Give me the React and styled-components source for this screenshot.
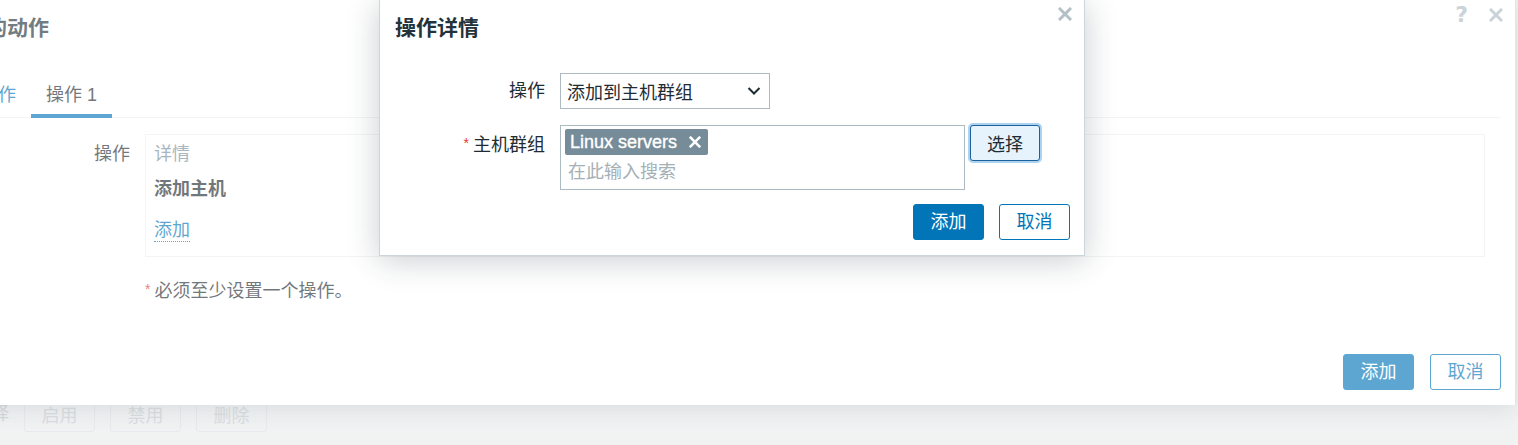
import React from 'react';
import styled, { createGlobalStyle } from 'styled-components';

const FONT = `"Liberation Sans", "Noto Sans CJK SC", sans-serif`;
const BLUE = '#0275b8';
const TEXT = '#1f2c33';

const Global = createGlobalStyle`
  html, body { margin: 0; padding: 0; }
  body {
    font-family: ${FONT};
    font-size: 18px;
    color: ${TEXT};
    background: #e9eced;
    overflow: hidden;
  }
  * { box-sizing: border-box; }
`;

const Page = styled.div`
  position: relative;
  width: 1518px;
  height: 445px;
  overflow: hidden;
  display: flex;
  flex-direction: column;
  justify-content: flex-end;
`;

const PageFooter = styled.div`
  display: flex;
  align-items: center;
  gap: 15px;
  margin-left: -42px;
  padding-bottom: 13px;
`;

const SelectedCount = styled.span`
  color: #bcc5ca;
  line-height: 24px;
`;

const GhostButton = styled.button`
  width: 71px;
  height: 36px;
  padding: 0;
  font: inherit;
  color: #c3cbcf;
  background: transparent;
  border: 1px solid #d9dfe2;
  border-radius: 3px;
`;

/* ---------- outer (background) modal ---------- */

const OuterModal = styled.div`
  position: absolute;
  left: -50px;
  top: 0;
  width: 1566px;
  height: 405px;
  background: #fff;
  border-right: 1px solid #cfd7db;
  box-shadow: 0 2px 24px rgba(40, 55, 65, 0.22);
  display: flex;
  flex-direction: column;
`;

const ModalHeader = styled.div`
  padding: 16px 15px;
`;

const ModalTitle = styled.h4`
  margin: 0;
  font-size: 21px;
  line-height: 24px;
  font-weight: bold;
  color: #23333b;
`;

const HeaderTools = styled.div`
  position: absolute;
  top: 4px;
  right: 12px;
  display: flex;
  align-items: center;
  gap: 21px;
`;

const HelpMark = styled.span`
  font-family: "DejaVu Sans", sans-serif;
  font-weight: bold;
  font-size: 22px;
  line-height: 22px;
  color: #acbbc2;
`;

const CloseIcon = ({ color = '#acbbc2', size = 14 }) => (
  <svg width={size} height={size} viewBox="0 0 14 14">
    <path d="M2 2 L12 12 M12 2 L2 12" stroke={color} strokeWidth="3" strokeLinecap="square" />
  </svg>
);

const ModalBody = styled.div`
  padding: 0 15px;
`;

const TabList = styled.div`
  margin-top: 27px;
  display: flex;
  border-bottom: 1px solid #ebeef0;
`;

const Tab = styled.div`
  padding: 0 15px 7px;
  line-height: 24px;
  color: ${(p) => (p.$active ? TEXT : BLUE)};
  border-bottom: 4px solid ${(p) => (p.$active ? BLUE : 'transparent')};
  margin-bottom: -1px;
`;

const FormGrid = styled.div`
  margin-top: 16px;
  padding-right: 15px;
  display: grid;
  grid-template-columns: 165px 1fr;
  column-gap: 15px;
  row-gap: 20px;
`;

const FormLabel = styled.div`
  text-align: right;
  line-height: 24px;
  padding-top: ${(p) => p.$top || 0}px;
  color: ${TEXT};
`;

const OpsBox = styled.div`
  height: 123px;
  border: 1px solid #ebeef0;
  padding: 7px 8px 0;
  display: flex;
  flex-direction: column;
  align-items: flex-start;
`;

const OpsHead = styled.div`
  line-height: 24px;
  color: #768d99;
`;

const OpsItem = styled.div`
  margin-top: 11px;
  line-height: 24px;
  font-weight: bold;
  color: ${TEXT};
`;

const LinkText = styled.span`
  margin-top: 18px;
  line-height: 22px;
  color: ${BLUE};
  border-bottom: 1px dotted ${BLUE};
`;

const Note = styled.div`
  grid-column: 2;
  line-height: 24px;
  color: ${TEXT};
`;

const Star = styled.span`
  color: #e33734;
  font-size: 14px;
  vertical-align: 3px;
  margin-right: 4px;
`;

const Footer = styled.div`
  margin-top: auto;
  display: flex;
  justify-content: flex-end;
  gap: ${(p) => p.$gap || 15}px;
  padding: ${(p) => p.$pad || '0 15px 15px'};
`;

const Button = styled.button`
  min-width: 71px;
  height: 36px;
  padding: 0 16px;
  font: inherit;
  line-height: 34px;
  border-radius: 3px;
  border: 1px solid ${BLUE};
  background: ${(p) => (p.$primary ? BLUE : '#fff')};
  color: ${(p) => (p.$primary ? '#fff' : BLUE)};
  cursor: pointer;
`;

const Scrim = styled.div`
  position: absolute;
  inset: 0;
  background: rgba(255, 255, 255, 0.36);
`;

/* ---------- foreground dialog ---------- */

const Dialog = styled.div`
  position: absolute;
  left: 379px;
  top: 0;
  width: 706px;
  height: 256px;
  background: #fff;
  border: 1px solid #ccd5da;
  border-top: 0;
  box-shadow: 0 4px 30px rgba(30, 45, 55, 0.24);
  display: flex;
  flex-direction: column;
`;

const DialogClose = styled.div`
  position: absolute;
  top: 7px;
  right: 12px;
  display: flex;
`;

const DialogHeader = styled.div`
  padding: 16px 15px 16px;
`;

const DialogGrid = styled.div`
  padding: 17px 15px 0;
  display: grid;
  grid-template-columns: 150px 1fr;
  column-gap: 15px;
  row-gap: 16px;
`;

const FieldRow = styled.div`
  display: flex;
  align-items: flex-start;
  gap: 5px;
`;

const Select = styled.div`
  width: 210px;
  height: 36px;
  border: 1px solid #acbbc2;
  padding: 0 8px 0 6px;
  display: flex;
  align-items: center;
  justify-content: space-between;
  color: ${TEXT};
`;

const MultiSelect = styled.div`
  width: 405px;
  height: 65px;
  border: 1px solid #acbbc2;
  padding: 3px 4px;
  display: flex;
  flex-direction: column;
  align-items: flex-start;
`;

const Tag = styled.span`
  height: 26px;
  display: inline-flex;
  align-items: center;
  gap: 12px;
  padding: 0 7px 0 5px;
  background: #768d99;
  color: #fff;
  border-radius: 2px;
  line-height: 26px;
  -webkit-text-stroke: 0.35px #fff;
`;

const Placeholder = styled.div`
  margin-top: 5px;
  padding-left: 3px;
  line-height: 24px;
  color: #a5b0b6;
`;

const PickButton = styled.button`
  height: 36px;
  padding: 0 16px;
  font: inherit;
  color: ${TEXT};
  background: #e6f2fc;
  border: 1px solid #1d609a;
  border-radius: 3px;
  box-shadow: 0 0 0 2px #abd2f1;
`;

const Chevron = () => (
  <svg width="14" height="10" viewBox="0 0 14 10">
    <path d="M1.5 2 L7 7.5 L12.5 2" fill="none" stroke="#1f2c33" strokeWidth="2" />
  </svg>
);

export default function App() {
  return (
    <>
      <Global />
      <Page>
        <PageFooter>
          <SelectedCount>0 选择</SelectedCount>
          <GhostButton>启用</GhostButton>
          <GhostButton>禁用</GhostButton>
          <GhostButton>删除</GhostButton>
        </PageFooter>

        <OuterModal>
          <ModalHeader>
            <ModalTitle>新的动作</ModalTitle>
          </ModalHeader>
          <HeaderTools>
            <HelpMark>?</HelpMark>
            <CloseIcon />
          </HeaderTools>
          <ModalBody>
            <TabList>
              <Tab>动作</Tab>
              <Tab $active>操作 1</Tab>
            </TabList>
            <FormGrid>
              <FormLabel $top={8}>操作</FormLabel>
              <OpsBox>
                <OpsHead>详情</OpsHead>
                <OpsItem>添加主机</OpsItem>
                <LinkText>添加</LinkText>
              </OpsBox>
              <Note>
                <Star>*</Star>必须至少设置一个操作。
              </Note>
            </FormGrid>
          </ModalBody>
          <Footer $gap={16} $pad="0 14px 15px">
            <Button $primary>添加</Button>
            <Button>取消</Button>
          </Footer>
        </OuterModal>

        <Scrim />

        <Dialog>
          <DialogClose>
            <CloseIcon color="#b3c0c6" />
          </DialogClose>
          <DialogHeader>
            <ModalTitle>操作详情</ModalTitle>
          </DialogHeader>
          <DialogGrid>
            <FormLabel $top={6}>操作</FormLabel>
            <Select>
              <span>添加到主机群组</span>
              <Chevron />
            </Select>
            <FormLabel $top={6}>
              <Star>*</Star>主机群组
            </FormLabel>
            <FieldRow>
              <MultiSelect>
                <Tag>
                  Linux servers
                  <CloseIcon color="#fff" size={12} />
                </Tag>
                <Placeholder>在此输入搜索</Placeholder>
              </MultiSelect>
              <PickButton>选择</PickButton>
            </FieldRow>
          </DialogGrid>
          <Footer $pad="14px 14px 15px">
            <Button $primary>添加</Button>
            <Button>取消</Button>
          </Footer>
        </Dialog>
      </Page>
    </>
  );
}
